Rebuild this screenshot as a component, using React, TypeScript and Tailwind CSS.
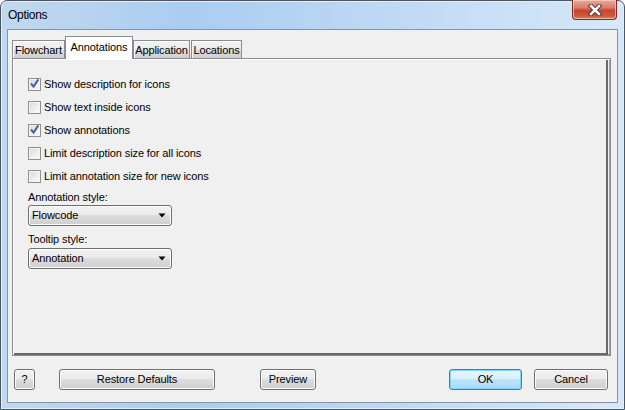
import React from "react";

const font = { fontFamily: '"Liberation Sans", Arial, sans-serif' };

function Checkbox({ checked, label }: { checked: boolean; label: string }) {
  return (
    <div className="flex h-[23px] items-center">
      <div className="flex h-[13px] w-[13px] items-center justify-center border border-[#8f8f8f] bg-white">
        <div className="relative h-[11px] w-[11px] border border-[#f4f4f4] bg-gradient-to-br from-[#dcdcdc] to-[#fbfbfb]">
          {checked && (
            <svg className="absolute left-[-1px] top-[-2px]" width="11" height="11" viewBox="0 0 11 11">
              <path d="M2 5.5 L4.6 8.6 L9.3 1.4" fill="none" stroke="#4a5f9e" strokeWidth="2" strokeLinejoin="miter" />
            </svg>
          )}
        </div>
      </div>
      <span className="ml-[3px] text-[11px] leading-[15px] tracking-[-0.1px] text-black">{label}</span>
    </div>
  );
}

function Select({ value }: { value: string }) {
  return (
    <div className="flex h-[21px] w-[144px] items-center justify-between rounded-[3px] border border-[#707070] bg-[linear-gradient(to_bottom,#f2f2f2_0%,#ebebeb_45%,#dddddd_50%,#cfcfcf_100%)] pl-[3px] pr-[5px] shadow-[inset_0_0_0_1px_#fcfcfc]">
      <span className="text-[11px] leading-[15px] tracking-[-0.1px] text-black">{value}</span>
      <svg width="8" height="5" viewBox="0 0 8 5">
        <path d="M0.5 0.5 L7.5 0.5 L4 4.5 Z" fill="#000" />
      </svg>
    </div>
  );
}

function Button({ label, w, def, className = "" }: { label: string; w: string; def?: boolean; className?: string }) {
  return (
    <div
      className={
        "flex h-[21px] items-center justify-center rounded-[3px] border text-[11px] leading-[15px] tracking-[-0.1px] text-black " +
        w +
        " " +
        className +
        " " +
        (def
          ? "border-[#3c7fb1] bg-[linear-gradient(to_bottom,#eaf6fd_0%,#d9f0fc_45%,#bee6fd_50%,#a7d9f5_100%)] shadow-[inset_0_0_0_1px_#7fd6fb]"
          : "border-[#707070] bg-[linear-gradient(to_bottom,#f2f2f2_0%,#ebebeb_45%,#dddddd_50%,#cfcfcf_100%)] shadow-[inset_0_0_0_1px_#fcfcfc]")
      }
    >
      {label}
    </div>
  );
}

function Tab({ label, w, selected, className = "" }: { label: string; w: string; selected?: boolean; className?: string }) {
  if (selected) {
    return (
      <div
        className={
          "relative z-10 -mb-px flex h-[23px] items-start justify-center border border-b-0 border-[#898c95] bg-white pt-[3px] text-[11px] leading-[15px] tracking-[-0.1px] text-black " +
          w +
          " " +
          className
        }
      >
        {label}
      </div>
    );
  }
  return (
    <div
      className={
        "flex h-[18px] items-center justify-center border border-b-0 border-[#898c95] bg-[linear-gradient(to_bottom,#f2f2f2_0%,#ebebeb_50%,#dddddd_51%,#cfcfcf_100%)] pt-[1px] text-[11px] leading-[15px] tracking-[-0.1px] text-black shadow-[inset_1px_1px_0_#fcfcfc] " +
        w +
        " " +
        className
      }
    >
      {label}
    </div>
  );
}

export default function App() {
  return (
    <div style={font} className="h-[410px] w-[625px] bg-white">
      <div className="relative flex h-[410px] w-[625px] flex-col rounded-t-[7px] border border-[#4a5663] bg-[linear-gradient(to_right,#c2d8ee_0%,#aacdf1_30%,#b9d6f3_55%,#d8e8f8_100%)] shadow-[inset_0_0_0_1px_#e4eef9]">
        {/* Title bar */}
        <div className="flex h-[28px] items-center pl-[7px] pt-[1px]">
          <span className="text-[12px] leading-[15px] tracking-[-0.3px] text-black">Options</span>
        </div>
        {/* Close button */}
        <div className="absolute right-[7px] top-[-1px] flex h-[20px] w-[45px] items-center justify-center rounded-b-[4px] border border-t-0 border-[#7c2c22] bg-[linear-gradient(to_bottom,#e9a99b_0%,#d77f6c_40%,#c54530_55%,#cf5a41_85%,#e08a6d_100%)] shadow-[inset_0_0_0_1px_rgba(255,220,210,0.6)]">
          <svg width="16" height="12" viewBox="0 0 16 12">
            <path d="M4 2 L12 10 M12 2 L4 10" stroke="#4b2a25" strokeWidth="4.4" strokeLinecap="square" />
            <path d="M4 2 L12 10 M12 2 L4 10" stroke="#ffffff" strokeWidth="2.6" strokeLinecap="square" />
          </svg>
        </div>
        {/* Client area */}
        <div className="mx-[6px] flex h-[374px] flex-col border border-[#8195ad] bg-[#f0f0f0]">
          <div className="flex flex-col px-[4px] pt-[6px]">
            {/* Tabs */}
            <div className="flex h-[22px] items-end">
              <Tab label="Flowchart" w="w-[53px]" />
              <Tab label="Annotations" w="w-[68px]" selected />
              <Tab label="Application" w="w-[57px]" />
              <Tab label="Locations" w="w-[51px]" className="ml-[1px]" />
            </div>
            {/* Pane */}
            <div className="h-[298px] w-[599px] border border-[#898c95] bg-[#f0f0f0]">
              <div className="h-full w-full border-l border-t border-white shadow-[inset_-1px_-1px_0_#a0a0a0] pr-[2px]">
                <div className="h-full border-r-2 border-b-2 border-[#696969]">
                  <div className="flex flex-col pl-[14px] pt-[13px]">
                    <Checkbox checked label="Show description for icons" />
                    <Checkbox checked={false} label="Show text inside icons" />
                    <Checkbox checked label="Show annotations" />
                    <Checkbox checked={false} label="Limit description size for all icons" />
                    <Checkbox checked={false} label="Limit annotation size for new icons" />
                    <div className="mt-[2px] h-[15px] text-[11px] leading-[15px] tracking-[-0.1px] text-black">Annotation style:</div>
                    <Select value="Flowcode" />
                    <div className="mt-[6px] h-[15px] text-[11px] leading-[15px] tracking-[-0.1px] text-black">Tooltip style:</div>
                    <div className="mt-[1px]">
                      <Select value="Annotation" />
                    </div>
                  </div>
                </div>
              </div>
            </div>
          </div>
          {/* Buttons */}
          <div className="mt-[13px] flex items-center">
            <Button label="?" w="w-[21px]" className="ml-[6px]" />
            <Button label="Restore Defaults" w="w-[156px]" className="ml-[24px]" />
            <Button label="Preview" w="w-[56px]" className="ml-[45px]" />
            <Button label="OK" w="w-[73px]" def className="ml-[133px]" />
            <Button label="Cancel" w="w-[74px]" className="ml-[12px]" />
          </div>
        </div>
      </div>
    </div>
  );
}
